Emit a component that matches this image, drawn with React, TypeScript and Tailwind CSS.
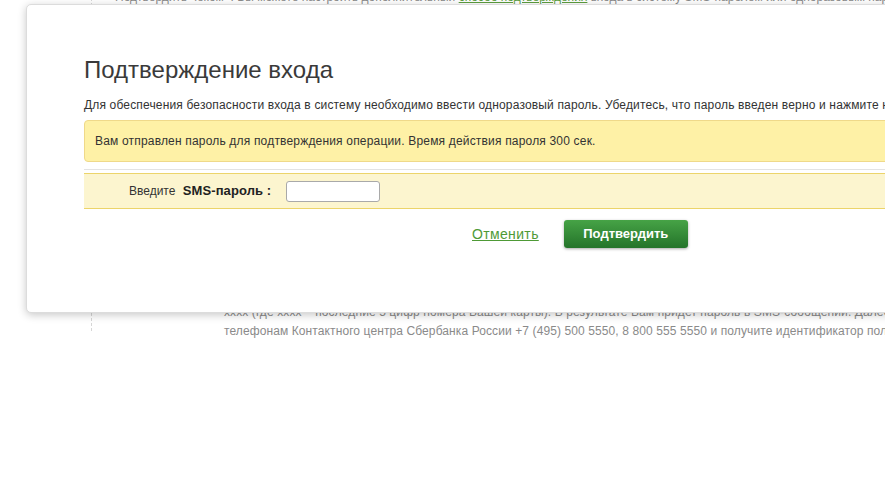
import React, { useState } from 'react';

export default function App() {
  const [code, setCode] = useState('');

  return (
    <div className="relative w-[885px] h-[479px] overflow-hidden bg-white font-['Liberation_Sans',Arial,sans-serif]">
      {/* page behind the modal */}
      <div className="ml-[91px] h-[343px] border-l border-dashed border-[#d6d6d6] pl-[23px] text-[12px] text-[#8a8a8a]">
        <p className="mt-[-12px] leading-[19px] whitespace-nowrap">
          Подтвердить чеком». Вы можете настроить дополнительный <span className="text-[#5c9e3f] underline">способ подтверждения</span> входа в систему SMS-паролем или одноразовым паролем
        </p>
        <div className="mt-[296px] pl-[109px] leading-[19px] whitespace-nowrap tracking-[0.1px]">
          <p>xxxx (где xxxx – последние 5 цифр номера Вашей карты). В результате Вам придет пароль в SMS-сообщении. Далее позвоните</p>
          <p>телефонам Контактного центра Сбербанка России +7 (495) 500 5550, 8 800 555 5550 и получите идентификатор пользователя</p>
        </div>
      </div>

      {/* modal */}
      <div className="absolute left-[26px] top-[4px] w-[1000px] h-[309px] rounded-[5px] border border-[#dcdcdc] bg-white shadow-[0_2px_8px_rgba(0,0,0,0.22)] pl-[57px] pt-[51px]">
        <h1 className="text-[24px] leading-[28px] text-[#3a3a3a] whitespace-nowrap">Подтверждение входа</h1>
        <p className="mt-[13px] text-[12px] leading-[16px] text-[#333] whitespace-nowrap tracking-[0.16px]">
          Для обеспечения безопасности входа в систему необходимо ввести одноразовый пароль. Убедитесь, что пароль введен верно и нажмите на кнопку «Подтвердить».
        </p>
        <div className="mt-[7px] h-[42px] flex items-center rounded-[4px] border border-[#efd98a] bg-[#fef1a6] pl-[10px] text-[12px] text-[#333] whitespace-nowrap tracking-[0.18px]">
          Вам отправлен пароль для подтверждения операции. Время действия пароля 300 сек.
        </div>
        <div className="mt-[7px] border-t border-[#e3e3e3] pt-[3px]">
          <div className="h-[36px] flex items-center border-y border-[#ecd46a] bg-[#fcf5cf] pl-[45px]">
            <label className="text-[12px] text-[#333] whitespace-nowrap">
              Введите <b className="ml-[4px] text-[13px] tracking-[0.1px] text-[#222]">SMS-пароль :</b>
            </label>
            <input
              value={code}
              onChange={e => setCode(e.target.value)}
              autoFocus
              className="ml-[15px] w-[94px] h-[21px] rounded-[3px] border border-[#a9a9a9] bg-white px-[2px] text-[12px] outline-none"
            />
          </div>
        </div>
        <div className="mt-[11px] flex items-center pl-[388px] gap-[25px]">
          <a href="#" className="text-[14px] tracking-[0.35px] text-[#4e9a36] underline">Отменить</a>
          <button className="w-[124px] h-[28px] rounded-[3px] bg-gradient-to-b from-[#46a346] to-[#24742a] text-white text-[13px] font-bold shadow-[0_1px_3px_rgba(0,0,0,0.35)]">
            Подтвердить
          </button>
        </div>
      </div>
    </div>
  );
}
